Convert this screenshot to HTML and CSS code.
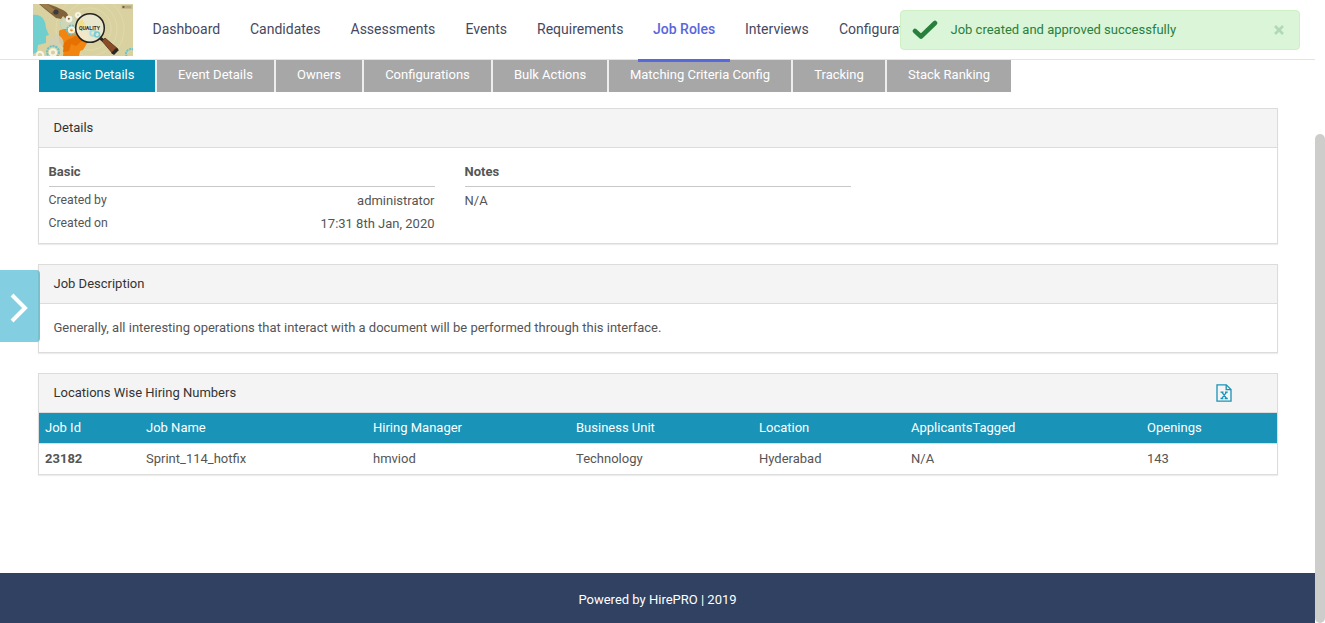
FILE: index.html
```html
<!DOCTYPE html>
<html lang="en">
<head>
<meta charset="utf-8">
<title>Job Roles</title>
<link rel="stylesheet" href="styles.css">
</head>
<body>
<div class="page">
  <header class="topbar">
    <svg class="logo" viewBox="0 0 100 52">
      <rect width="100" height="52" fill="#d9d2a0"/>
      <g fill="none" stroke="#e2dcb6" stroke-width=".6"><circle cx="57" cy="25" r="21"/><circle cx="57" cy="25" r="27"/><circle cx="57" cy="25" r="34"/></g>
      <path d="M0 11C7 10 11 14 12.500 20L13 24L16 31L13 32L13 39L5 41L4 48L0 50Z" fill="#6fcfce"/>
      <circle cx="36" cy="20" r="8.500" fill="#cfd6b8" stroke="#9fcfc0" stroke-width=".6" stroke-dasharray="1.500 1"/>
      <path d="M26 27C30 24 37 25 43 27L45 19C49 17 54 19 55 24L56 35L53 41L50 46L47 47L46 52H30L31 44L26 38Z" fill="#f28410"/>
      <path d="M34 36L43 32L50 36L43 42L38 40L36 47L30 48L31 39Z" fill="#e57103"/>
      <path d="M16 40C15 35 20 32 24 30C29 33 32 37 30 42L24 44L18 43Z" fill="#d3d0b4" opacity=".85"/>
      <path d="M6 0H15C23 3 30 5 34 9L37 15L34 16L30 12L28 15L23 14L13 6Z" fill="#80613a"/>
      <path d="M7 0H14L22 6L18 9Z" fill="#9b7d4c"/>
      <circle cx="23" cy="8" r="2.600" fill="#3b3b40"/>
      <g fill="none">
        <g stroke="#68c3ca" stroke-width="2" stroke-dasharray="2.200 .8"><circle cx="38.500" cy="26" r="4.500"/><circle cx="20" cy="48" r="6"/><circle cx="98" cy="50" r="5"/></g>
        <g stroke="#f6f3e2" stroke-width="2.200"><circle cx="36" cy="15" r="2.300"/><circle cx="45" cy="11" r="2"/><circle cx="38.500" cy="26" r="2.500"/><circle cx="20" cy="48.500" r="3.200"/><circle cx="7" cy="51" r="3.200"/></g>
      </g>
      <circle cx="57" cy="24" r="14.300" fill="#e9e8cf"/>
      <path d="M44 20L49 15L52 20L47 25Z" fill="#f4df84"/>
      <path d="M43 26L53 28L56 36L48 35Z" fill="#f2e8c9"/>
      <circle cx="60" cy="29" r="2.700" fill="none" stroke="#a6dadb" stroke-width="2"/><circle cx="64" cy="30.500" r="2.500" fill="none" stroke="#79cbd2" stroke-width="1.600"/>
      <circle cx="57" cy="24" r="14.300" fill="none" stroke="#252423" stroke-width="1.500"/>
      <text class="logo-text" x="56.500" y="26.400" text-anchor="middle">QUALITY</text>
      <path d="M67 34L71 37" stroke="#292725" stroke-width="3"/>
      <path d="M69 37L72 34L85 45L80 50Z" fill="#8c4b26" stroke="#53301e" stroke-width=".8"/>
      <path d="M83 44L86 46L81 51L78 49Z" fill="#292725"/>
      <rect x="88.500" y="1" width="11" height="4" fill="#c4b990"/><rect x="89.500" y="2" width="2" height="2" fill="#7a593e"/><path d="M92.500 3H98" stroke="#a1956e"/>
    </svg>
    <nav class="nav">
      <a class="nav-item w-dash">Dashboard</a>
      <a class="nav-item w-cand">Candidates</a>
      <a class="nav-item w-assess">Assessments</a>
      <a class="nav-item w-events">Events</a>
      <a class="nav-item w-req">Requirements</a>
      <a class="nav-item nav-active">Job Roles</a>
      <a class="nav-item w-int">Interviews</a>
      <a class="nav-item w-conf">Configurations</a>
    </nav>
  </header>

  <main class="content">
    <div class="tabs">
      <a class="tab tab-active">Basic Details</a>
      <a class="tab t-event">Event Details</a>
      <a class="tab t-owners">Owners</a>
      <a class="tab t-config">Configurations</a>
      <a class="tab t-bulk">Bulk Actions</a>
      <a class="tab t-match">Matching Criteria Config</a>
      <a class="tab t-track">Tracking</a>
      <a class="tab t-stack">Stack Ranking</a>
    </div>

    <section class="panel details">
      <h2 class="panel-head">Details</h2>
      <div class="panel-body columns">
        <div class="column">
          <h3 class="column-head">Basic</h3>
          <div class="row"><span class="label">Created by</span><span>administrator</span></div>
          <div class="row"><span class="label">Created on</span><span>17:31 8th Jan, 2020</span></div>
        </div>
        <div class="column">
          <h3 class="column-head">Notes</h3>
          <div class="row"><span>N/A</span></div>
        </div>
      </div>
    </section>

    <section class="panel description">
      <h2 class="panel-head">Job Description</h2>
      <p class="description-text">Generally, all interesting operations that interact with a document will be performed through this interface.</p>
    </section>

    <section class="panel locations">
      <h2 class="panel-head">Locations Wise Hiring Numbers
        <svg class="excel" viewBox="0 0 16 18" fill="none" stroke="#1993b8" stroke-width="1.300">
          <path d="M1 .8H10.300L15 5.500V17.200H1Z"/><path d="M10.200 1V5.600H15"/>
          <path d="M4.500 8.200H7.500M9 8.200H11.800M4.500 14.500H7.300M8.700 14.500H11.800M6 8.400L10.500 14.300M10.400 8.400L5.800 14.300"/>
        </svg>
      </h2>
      <table class="table">
        <colgroup><col class="c-id"><col class="c-name"><col class="c-manager"><col class="c-unit"><col class="c-location"><col class="c-tagged"><col></colgroup>
        <thead><tr><th>Job Id</th><th>Job Name</th><th>Hiring Manager</th><th>Business Unit</th><th>Location</th><th>ApplicantsTagged</th><th>Openings</th></tr></thead>
        <tbody><tr><td><b>23182</b></td><td>Sprint_114_hotfix</td><td>hmviod</td><td>Technology</td><td>Hyderabad</td><td>N/A</td><td>143</td></tr></tbody>
      </table>
    </section>
  </main>
  <footer class="footer">Powered by HirePRO | 2019</footer>
</div>

<div class="drawer-toggle">
  <svg class="chevron" viewBox="0 0 18 30"><path d="M2 2L15 15L2 28" fill="none" stroke="#fff" stroke-width="4"/></svg>
</div>
<div class="toast">
  <svg class="check" viewBox="0 0 26 20"><path d="M3 11L9 16.500L23 3" fill="none" stroke="#28803c" stroke-width="4.600" stroke-linecap="round" stroke-linejoin="round"/></svg>
  <span class="toast-text">Job created and approved successfully</span>
  <svg class="close" viewBox="0 0 10 10"><path d="M1 1L9 9M9 1L1 9" stroke="#b2d9b5" stroke-width="2.600"/></svg>
</div>
<div class="scroll-thumb"></div>
</body>
</html>
```
FILE: styles.css
```css
* { box-sizing: border-box; }
body { margin: 0; height: 623px; overflow: hidden; background: #fff; color: #555; font: 13px/20px Roboto, sans-serif; }
h2, h3, p { margin: 0; font-size: 13px; }
.page { width: 1315px; height: 623px; display: flex; flex-direction: column; }
.topbar { height: 60px; flex: none; display: flex; border-bottom: 1px solid #e3e3e6; padding-left: 33px; }
.logo { width: 100px; height: 52px; margin-top: 4px; flex: none; }
.logo-text { font: bold 5.2px Roboto, sans-serif; fill: #302d2a; }
.nav { display: flex; margin-left: 4.5px; height: 62px; }
.nav-item { flex: none; padding: 19px 0 0 15px; font-size: 14px; color: #464861; white-space: nowrap; }
.w-dash { width: 97.5px; }
.w-cand { width: 100.5px; }
.w-assess { width: 115px; }
.w-events { width: 71.5px; }
.w-req { width: 116px; }
.nav-active { width: 92px; color: #5867dd; font-weight: 500; border-bottom: 3px solid #5867dd; z-index: 2; }
.w-int { width: 94px; }
.w-conf { width: 120px; }
.content { padding: 0 37px 0 38px; flex: 1; }
.tabs { display: flex; width: 973px; height: 32px; margin-bottom: 16px; padding-left: 1px; }
.tab { height: 32px; padding-top: 5px; text-align: center; color: #fff; background: #a7a7a7; margin-left: 2px; box-shadow: -2px 0 #eee; flex: none; }
.tab-active { width: 116px; margin: 0; background: #078bb0; box-shadow: none; }
.t-event { width: 117px; }
.t-owners { width: 86px; }
.t-config { width: 127px; }
.t-bulk { width: 114px; }
.t-match { width: 182px; }
.t-track { width: 92px; }
.t-stack { width: 124px; }
.panel { border: 1px solid #dcdcdc; box-shadow: 0 1px 1px rgba(0,0,0,.07); }
.panel-head { display: flex; justify-content: space-between; align-items: center; height: 39px; padding: 0 44.6px 1px 14.5px; background: #f4f4f4; border-bottom: 1px solid #dcdcdc; color: #333; font-weight: 400; }
.details { height: 136px; margin-bottom: 20px; }
.panel-body { padding: 14px 9.5px; }
.columns { display: flex; gap: 30px; }
.column { width: 386px; }
.column-head { height: 25px; border-bottom: 1px solid #c8c8c8; margin-bottom: 4px; font-weight: 700; }
.row { display: flex; justify-content: space-between; height: 23px; }
.label { font-size: 12.25px; margin-top: -1px; }
.description { height: 89px; margin-bottom: 20px; }
.description-text { padding: 14px 14.5px; }
.locations { height: 102px; }
.excel { width: 16px; height: 18px; }
.table { width: 100%; border-collapse: collapse; table-layout: fixed; }
.table th, .table td { padding: 0 6px; text-align: left; font-weight: 400; }
.table th { height: 30px; color: #fff; background: #1993b8; }
.table td { height: 31px; border-top: 1px solid #ddd; border-bottom: 1px solid #ddd; }
.c-id { width: 101px; }
.c-name { width: 227px; }
.c-manager { width: 203px; }
.c-unit { width: 183px; }
.c-location { width: 152px; }
.c-tagged { width: 236px; }
.footer { height: 50px; flex: none; padding-top: 17px; text-align: center; color: #fff; background: #304161; }
.drawer-toggle { position: absolute; left: 0; top: 270px; width: 40px; height: 72px; border-radius: 0 4px 4px 0; background: #83cfe1; border-right: 2px solid #78bfd0; padding: 23px 0 0 10px; }
.chevron { display: block; width: 18px; height: 30px; }
.toast { position: absolute; left: 900px; top: 10px; width: 400px; height: 40px; display: flex; align-items: center; padding: 0 15px 1px 11px; background: #dbf5d9; border: 1px solid #cff0c4; border-radius: 4px; color: #28803c; }
.check { width: 26px; height: 20px; }
.toast-text { margin-left: 12.5px; flex: 1; }
.close { width: 10px; height: 10px; }
.scroll-thumb { position: absolute; right: 0; top: 134px; width: 10px; height: 489px; border-radius: 5px; background: #cdcdcb; }
```
